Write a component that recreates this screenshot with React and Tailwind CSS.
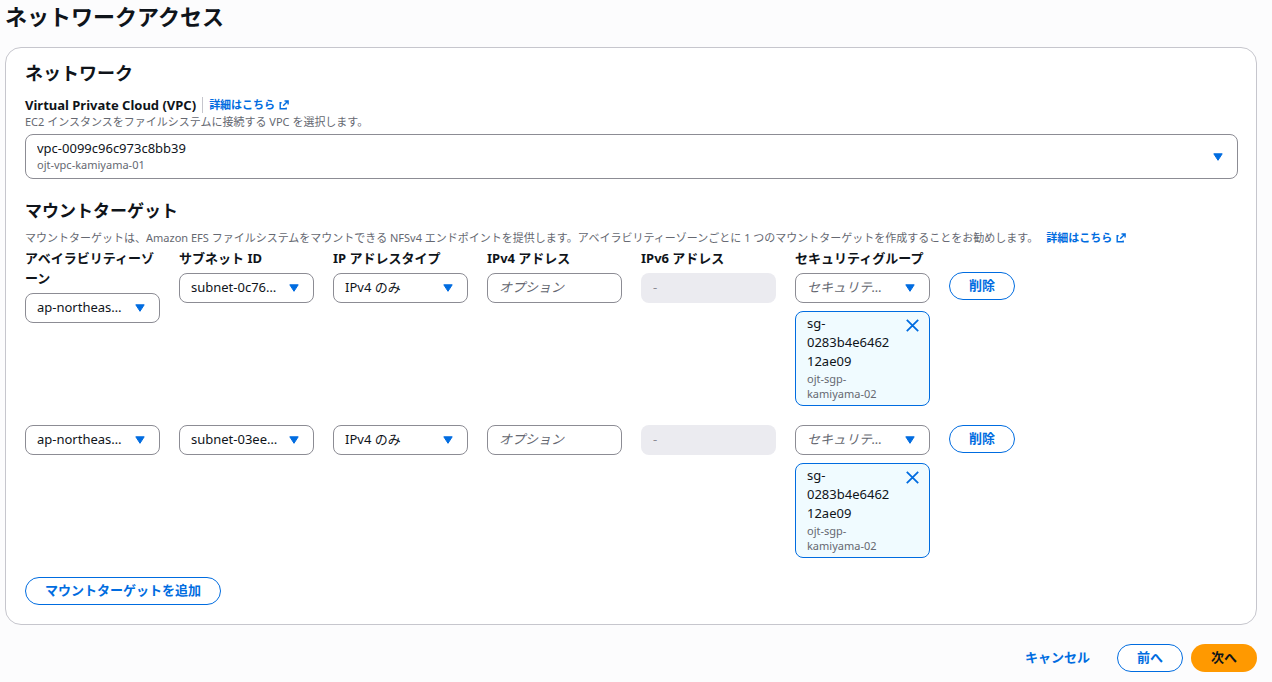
import { useState } from "react"

const INITIAL_TARGETS = [
  { id: 1, zone: "ap-northeas…", subnet: "subnet-0c76…", ipType: "IPv4 のみ" },
  { id: 2, zone: "ap-northeas…", subnet: "subnet-03ee…", ipType: "IPv4 のみ" },
]

const LABELS = {
  zone: "アベイラビリティーゾーン",
  subnet: "サブネット ID",
  ipType: "IP アドレスタイプ",
  ipv4: "IPv4 アドレス",
  ipv6: "IPv6 アドレス",
  group: "セキュリティグループ",
}

export default function App() {
  const [targets, setTargets] = useState(INITIAL_TARGETS)

  const addTarget = () => {
    setTargets(prev => [...prev, { ...INITIAL_TARGETS[0], id: Date.now() }])
  }

  const removeTarget = (id) => {
    setTargets(prev => prev.filter(t => t.id !== id))
  }

  return (
    <main className="min-h-screen bg-[#fcfcfd] pl-[5px] pr-[15px] pt-0.5 pb-2.5 font-['Noto_Sans','Noto_Sans_CJK_JP',sans-serif] text-[13px] leading-5 text-[#0f141a]">
      <h1 className="text-[22px] leading-7 font-bold">ネットワークアクセス</h1>

      <section className="mt-[17px] rounded-2xl border border-[#c6c6cd] bg-white pt-[13px] pr-[18px] pb-[19px] pl-[19px]">
        <h2 className="text-[18px] leading-6 font-bold">ネットワーク</h2>

        <div className="mt-[11px] flex items-center leading-[18px]">
          <label htmlFor="vpc" className="font-bold">Virtual Private Cloud (VPC)</label>
          <span className="mx-1.5 h-4 w-px bg-[#c6c6cd]" />
          <InfoLink />
        </div>
        <p className="text-[11px] leading-4 text-[#656871]">EC2 インスタンスをファイルシステムに接続する VPC を選択します。</p>
        <div className="relative mt-1">
          <select id="vpc" className="block h-[45px] w-full appearance-none rounded-lg border border-[#8c8c94] bg-white pl-[11px] pr-10 pb-[18px]">
            <option>vpc-0099c96c973c8bb39</option>
          </select>
          <span className="pointer-events-none absolute bottom-1.5 left-3 text-[11px] leading-4 text-[#656871]">ojt-vpc-kamiyama-01</span>
          <Caret />
        </div>

        <h3 className="mt-5 text-[17px] leading-6 font-bold">マウントターゲット</h3>
        <p className="mt-[7px] text-[11px] leading-4 text-[#656871]">
          マウントターゲットは、Amazon EFS ファイルシステムをマウントできる NFSv4 エンドポイントを提供します。アベイラビリティーゾーンごとに 1 つのマウントターゲットを作成することをお勧めします。
          <span className="ml-2">
            <InfoLink />
          </span>
        </p>

        <div className="mt-0.5 flex flex-col gap-[19px]">
          {targets.map((target, i) => (
            <TargetRow key={target.id} target={target} first={i === 0} onRemove={() => removeTarget(target.id)} />
          ))}
        </div>

        <div className="mt-[19px]">
          <Button onClick={addTarget}>マウントターゲットを追加</Button>
        </div>
      </section>

      <footer className="mt-[19px] flex justify-end gap-2">
        <button type="button" className="h-7 px-[19px] pb-0.5 font-bold text-[#006ce0]">キャンセル</button>
        <Button>前へ</Button>
        <button type="button" className="h-7 rounded-full bg-[#ff9900] px-5 pb-0.5 font-bold">次へ</button>
      </footer>
    </main>
  )
}

function TargetRow({ target, first, onRemove }) {
  const [hasGroup, setHasGroup] = useState(true)
  const field = (name) => ({ id: `${name}-${target.id}`, label: LABELS[name], showLabel: first })

  return (
    <div className="grid grid-cols-[repeat(6,minmax(0,1fr))_289px] items-start gap-x-[19px]">
      <Field {...field("zone")}>
        <Select {...field("zone")} value={target.zone} />
      </Field>
      <Field {...field("subnet")}>
        <Select {...field("subnet")} value={target.subnet} />
      </Field>
      <Field {...field("ipType")}>
        <Select {...field("ipType")} value={target.ipType} />
      </Field>
      <Field {...field("ipv4")}>
        <input
          id={field("ipv4").id}
          aria-label={LABELS.ipv4}
          type="text"
          placeholder="オプション"
          className="block h-[30px] w-full rounded-lg border border-[#8c8c94] bg-white px-[11px] pb-0.5 placeholder:italic placeholder:text-[#656871]"
        />
      </Field>
      <Field {...field("ipv6")}>
        <input
          id={field("ipv6").id}
          aria-label={LABELS.ipv6}
          type="text"
          placeholder="-"
          disabled
          className="block h-[30px] w-full rounded-lg bg-[#ebebf0] px-3 pb-0.5 placeholder:text-[#8c8c94]"
        />
      </Field>
      <Field {...field("group")}>
        <Select {...field("group")} value="セキュリテ…" placeholder />
        {hasGroup && (
          <div className="mt-2 flex items-start justify-between rounded-lg border border-[#006ce0] bg-[#f0fbff] pt-0.5 pb-1 pl-[11px] pr-2.5">
            <div className="w-[88px] break-words">
              <div className="leading-[19px]">sg-0283b4e646212ae09</div>
              <div className="text-[11px] leading-[15px] text-[#656871]">ojt-sgp-kamiyama-02</div>
            </div>
            <button type="button" aria-label="削除" onClick={() => setHasGroup(false)} className="mt-[5px] text-[#006ce0]">
              <svg width="13" height="13" viewBox="0 0 13 13" fill="none" stroke="currentColor" strokeWidth="1.8">
                <path d="M0.8 0.8 12.2 12.2M12.2 0.8 0.8 12.2" />
              </svg>
            </button>
          </div>
        )}
      </Field>
      <div className={first ? "mt-6" : ""}>
        <Button onClick={onRemove}>削除</Button>
      </div>
    </div>
  )
}

// only the first row carries visible labels, the others rely on aria-label
function Field({ id, label, showLabel, children }) {
  return (
    <div>
      {showLabel && <label htmlFor={id} className="mb-[5px] block font-bold">{label}</label>}
      {children}
    </div>
  )
}

function Select({ id, label, value, placeholder }) {
  return (
    <div className="relative">
      <select
        id={id}
        aria-label={label}
        className={`block h-[30px] w-full appearance-none rounded-lg border border-[#8c8c94] bg-white pb-0.5 pl-[11px] pr-8 ${placeholder ? "italic text-[#656871]" : ""}`}
      >
        <option>{value}</option>
      </select>
      <Caret />
    </div>
  )
}

function Caret() {
  return (
    <span className="pointer-events-none absolute inset-y-0 right-[15px] flex items-center">
      <svg width="10" height="8" viewBox="0 0 10 8" fill="#006ce0" stroke="#006ce0" strokeLinejoin="round">
        <path d="M0.8 0.8h8.4L5 7.3z" />
      </svg>
    </span>
  )
}

function InfoLink() {
  return (
    <a href="#" className="inline-flex items-center gap-1 text-[11px] leading-4 font-bold text-[#006ce0]">
      詳細はこちら
      <svg width="10" height="10" viewBox="0 0 10 10" fill="none" stroke="currentColor" strokeWidth="1.4">
        <path d="M5.5 1h3.6v3.6M9 1 4.2 5.8M2.6 2.8H1.2v6h6V7.4" />
      </svg>
    </a>
  )
}

function Button({ onClick, children }) {
  return (
    <button
      type="button"
      onClick={onClick}
      className="h-7 rounded-full border border-[#006ce0] bg-white px-[19px] pb-0.5 font-bold text-[#006ce0]"
    >
      {children}
    </button>
  )
}
